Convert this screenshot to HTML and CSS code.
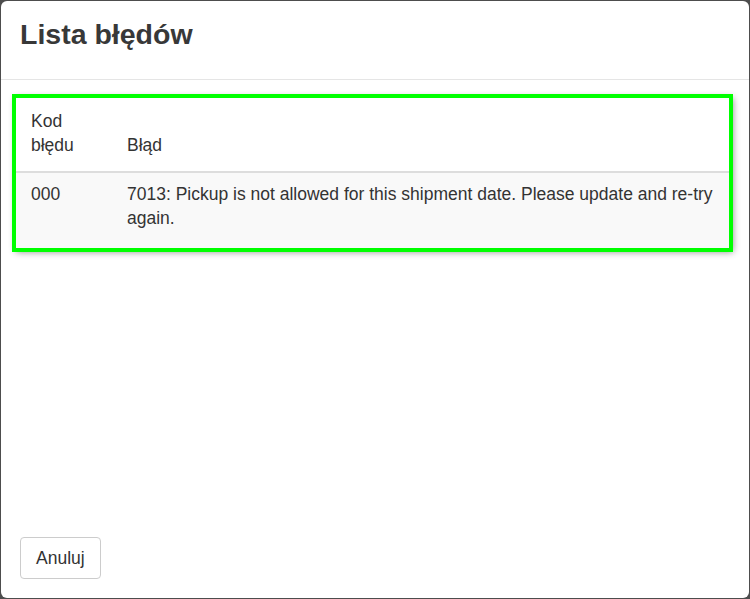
FILE: index.html
```html
<!DOCTYPE html>
<html lang="pl">
<head>
<meta charset="utf-8">
<title>Lista błędów</title>
<link rel="stylesheet" href="styles.css">
</head>
<body>
<div class="modal">
  <div class="modal-header">
    <h4 class="modal-title">Lista błędów</h4>
  </div>
  <div class="modal-body">
    <table class="errors">
      <colgroup>
        <col class="col-code">
        <col class="col-msg">
      </colgroup>
      <thead>
        <tr>
          <th>Kod błędu</th>
          <th>Błąd</th>
        </tr>
      </thead>
      <tbody>
        <tr>
          <td>000</td>
          <td>7013: Pickup is not allowed for this shipment date. Please update and re-try again.</td>
        </tr>
      </tbody>
    </table>
  </div>
  <div class="modal-footer">
    <button class="btn">Anuluj</button>
  </div>
</div>
</body>
</html>
```

FILE: styles.css
```css
html, body {
  margin: 0;
  padding: 0;
}
body {
  background: #4d4d4d;
  width: 750px;
  height: 599px;
  overflow: hidden;
  font-family: "Liberation Sans", Arial, sans-serif;
  font-size: 17.5px;
  line-height: 24.3px;
  color: #333;
}
.modal {
  margin: 1px;
  width: 748px;
  height: 597px;
  background: #fff;
  border-radius: 6px;
  display: flex;
  flex-direction: column;
  box-sizing: border-box;
}
.modal-header {
  padding: 16px 19px 28px;
  border-bottom: 1px solid #e5e5e5;
}
.modal-title {
  margin: 0;
  font-size: 28.5px;
  font-weight: bold;
  line-height: 34px;
  color: #383838;
}
.modal-body {
  flex: 1;
  padding: 18px 19px 0 15px;
}
.errors {
  width: 713px;
  border-collapse: collapse;
  table-layout: fixed;
  outline: 4px solid #00ff00;
  box-shadow: 2px 2px 7px 2px rgba(0, 0, 0, 0.45);
}
.col-code {
  width: 96px;
}
.errors th,
.errors td {
  text-align: left;
  vertical-align: bottom;
  font-weight: normal;
  padding: 11px 8px 13px 15px;
}
.errors thead th {
  border-bottom: 2px solid #ddd;
  background: #fff;
}
.errors tbody td {
  vertical-align: top;
  padding: 9px 8px 18px 15px;
  background: #f9f9f9;
}
.modal-footer {
  padding: 14px 19px 19px;
}
.btn {
  font-family: inherit;
  font-size: 17.5px;
  line-height: 24.3px;
  color: #333;
  background: #fff;
  border: 1px solid #ccc;
  border-radius: 4px;
  padding: 8px 15px;
  margin: 0;
}
```
